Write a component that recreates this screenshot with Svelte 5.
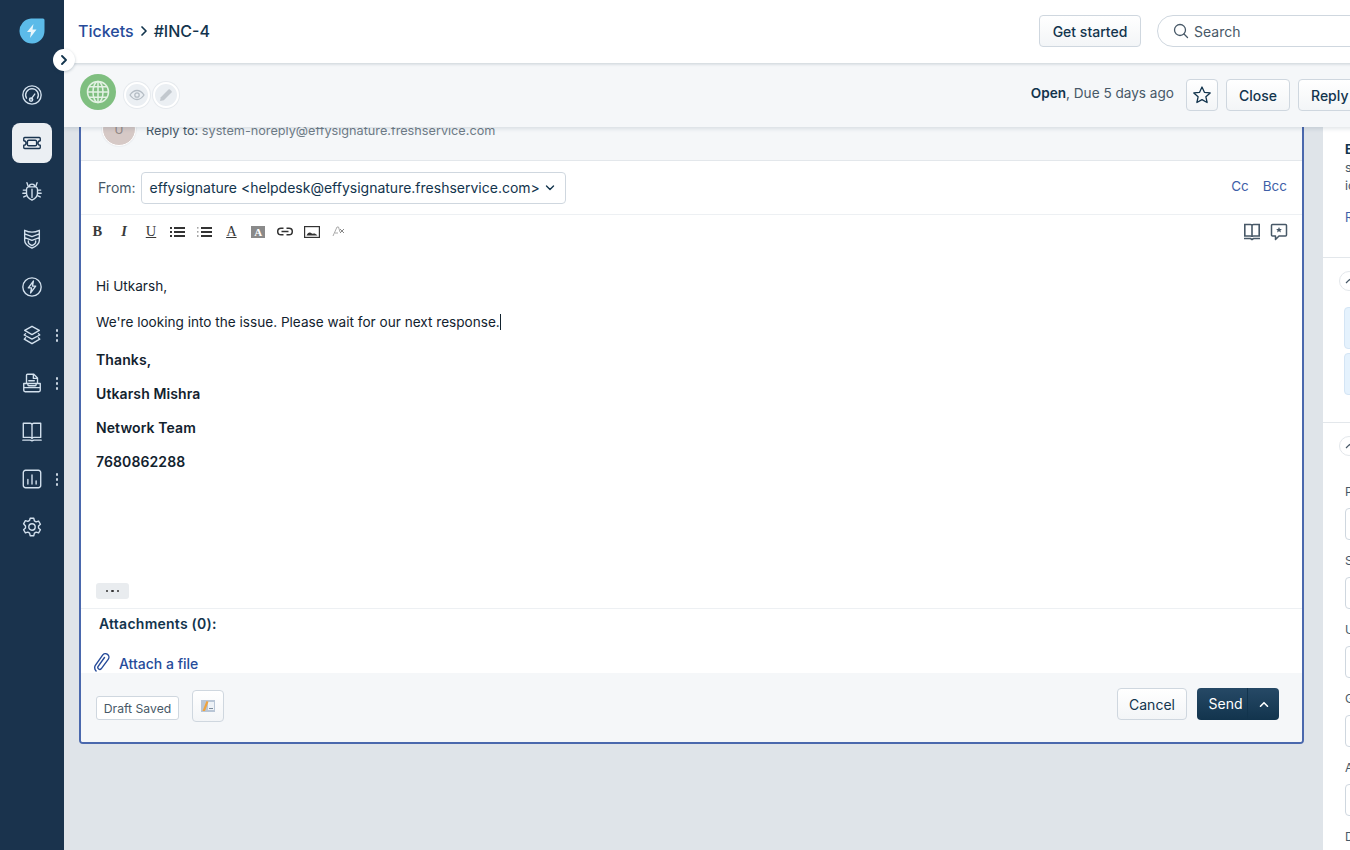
<script lang="ts">
  // sidebar entries, paths are drawn on a 24x24 box
  const nav = [
    { id: 'dashboard', d: 'M12 2a10 10 0 1 1 0 20a10 10 0 0 1 0-20z M12 5a7 7 0 0 0-6 10.500 M12 5a7 7 0 0 1 6 10.500 M11 16.500l4-5.500 M12.800 17a1.800 1.800 0 1 1-3.600 0a1.800 1.800 0 0 1 3.600 0z' },
    { id: 'tickets', active: true, d: 'M4 6h16a1 1 0 0 1 1 1v2.500a2.500 2.500 0 0 0 0 5V17a1 1 0 0 1-1 1H4a1 1 0 0 1-1-1v-2.500a2.500 2.500 0 0 0 0-5V7a1 1 0 0 1 1-1z M8.500 9h7a1.500 1.500 0 0 1 1.500 1.500v3a1.500 1.500 0 0 1-1.500 1.500h-7A1.500 1.500 0 0 1 7 13.500v-3A1.500 1.500 0 0 1 8.500 9z' },
    { id: 'problems', d: 'M8 7.500h8a3 3 0 0 1 2 3v4c0 3.500-3 6-6 7.500c-3-1.500-6-4-6-7.500v-4a3 3 0 0 1 2-3z M8 7.500L6.500 3 M16 7.500L17.500 3 M9 7.500c0-2 1.300-3 3-3s3 1 3 3 M12 10v9 M6 11H2.500 M6 14.500H2 M6 17l-3 1.500 M18 11h3.500 M18 14.500h4 M18 17l3 1.500' },
    { id: 'changes', d: 'M4 2.500c5 2.500 11 2.500 16 0v4l-8 3l-8-3z M4 6.500v7c0 4 4 6.500 8 8.500c4-2 8-4.500 8-8.500v-7 M4 10.500l8 3l8-3 M8 14v1.500c0 1.500 2 2.800 4 3.800c2-1 4-2.300 4-3.800V14' },
    { id: 'releases', d: 'M12 2a10 10 0 1 1 0 20a10 10 0 0 1 0-20z M13.500 5.500L8 13h3.500l-1 5.500L16 11h-3.500z' },
    { id: 'assets', dots: true, d: 'M12 2.500l8 4.500l-8 4.500L4 7z M5 10.500L3.500 12l8.500 4.500l8.500-4.500L19 10.500 M5 15L3.500 16.500L12 21.500l8.500-5L19 15' },
    { id: 'purchase', dots: true, d: 'M6 12V3.500A1 1 0 0 1 7 2.500h7l4 4V12 M13.500 2.500v4.500H18 M8.500 9.500h6 M3 12.500h18V20a1.500 1.500 0 0 1-1.500 1.500h-15A1.500 1.500 0 0 1 3 20z M3 17h18 M7.500 12.500v1.500a1 1 0 0 0 1 1h7a1 1 0 0 0 1-1v-1.500' },
    { id: 'solutions', d: 'M12 5.500V20 M12 5.500C12 4 11 3.500 10 3.500H2.500V19H10c1 0 2 .5 2 1.500c0-1 1-1.500 2-1.500h7.500V3.500H14c-1 0-2 .5-2 2z M2 22h8l2 .8l2-.8h8' },
    { id: 'reports', dots: true, d: 'M5 2.500h14a2.500 2.500 0 0 1 2.500 2.500v14a2.500 2.500 0 0 1-2.500 2.500H5A2.500 2.500 0 0 1 2.500 19V5A2.500 2.500 0 0 1 5 2.500z M7.500 17.500v-5 M12 17.500V7.500 M16.500 17.500v-3.500' },
    { id: 'admin', d: 'M10 2.500h4l.6 2.800l1.900 1.100l2.700-.9l2 3.500l-2.100 1.900v2.200l2.100 1.900l-2 3.500l-2.700-.9l-1.900 1.100l-.6 2.800h-4l-.6-2.800l-1.900-1.100l-2.700.9l-2-3.500l2.100-1.900v-2.200L2.800 8.500l2-3.500l2.700.9l1.900-1.100z M12 8.500a3.500 3.500 0 1 1 0 7a3.500 3.500 0 0 1 0-7z' }
  ];

  const fields = ['Priority', 'Status', 'Urgency', 'Group', 'Agent'];
  const signature = ['Thanks,', 'Utkarsh Mishra', 'Network Team', '7680862288'];
</script>

<div class="app">
  <aside class="sidebar">
    <div class="logo">
      <svg width="26" height="26" viewBox="0 0 26 26">
        <path d="M12 0.500h12a1.500 1.500 0 0 1 1.500 1.500v11a12.500 12.500 0 1 1-13.500-12.500z" fill="#5cbbe9" />
        <path d="M14.500 6L8 14h4l-1 6l6.500-8.500h-4z" fill="#e8f6fc" />
      </svg>
    </div>
    <nav class="nav">
      {#each nav as item}
        <div class="nav-item" class:active={item.active}>
          <svg width="22" height="22" viewBox="0 0 24 24" fill="none" stroke={item.active ? '#1b3550' : '#d3e1ee'} stroke-width="1.500" stroke-linejoin="round" stroke-linecap="round"><path d={item.d} /></svg>
          {#if item.dots}
            <span class="dots"><i></i><i></i><i></i></span>
          {/if}
        </div>
      {/each}
    </nav>
  </aside>

  <button class="expand" aria-label="Expand">
    <svg width="10" height="10" viewBox="0 0 10 10" fill="none" stroke="#12344d" stroke-width="1.800" stroke-linecap="round" stroke-linejoin="round"><path d="M3 1l4 4l-4 4" /></svg>
  </button>

  <main class="main">
    <header class="topbar">
      <div class="crumbs">
        <a href="#tickets">Tickets</a>
        <svg width="10" height="12" viewBox="0 0 10 12" fill="none" stroke="#12344d" stroke-width="1.700" stroke-linecap="round" stroke-linejoin="round"><path d="M3 2l4 4l-4 4" /></svg>
        <span>#INC-4</span>
      </div>
      <button class="btn started">Get started</button>
      <div class="search">
        <svg width="16" height="16" viewBox="0 0 16 16" fill="none" stroke="#475867" stroke-width="1.300" stroke-linecap="round"><circle cx="7" cy="7" r="5.500" /><path d="M11 11l3.500 3.500" /></svg>
        <span>Search</span>
      </div>
    </header>

    <div class="subbar">
      <div class="globe">
        <svg width="24" height="24" viewBox="0 0 24 24" fill="none" stroke="#e3f2e3" stroke-width="1.500"><circle cx="12" cy="12" r="10.500" /><ellipse cx="12" cy="12" rx="5" ry="10.500" /><path d="M12 1.500v21M1.500 12h21M3 6.800h18M3 17.200h18" /></svg>
      </div>
      <span class="round-ico">
        <svg width="16" height="12" viewBox="0 0 16 12" fill="none" stroke="#b4bcc4" stroke-width="1.300"><path d="M1 6c2-3 4.500-4.500 7-4.500S13 3 15 6c-2 3-4.500 4.500-7 4.500S3 9 1 6z" /><circle cx="8" cy="6" r="2.200" /></svg>
      </span>
      <span class="round-ico">
        <svg width="14" height="14" viewBox="0 0 14 14" fill="#c2c8ce"><path d="M1 13l.8-3.800L9.500 1.500a1 1 0 0 1 1.400 0l1.600 1.600a1 1 0 0 1 0 1.400L4.800 12.200z" /></svg>
      </span>
      <div class="status"><b>Open</b>, Due 5 days ago</div>
      <button class="btn star" aria-label="Star">
        <svg width="20" height="20" viewBox="0 0 20 20" fill="none" stroke="#12344d" stroke-width="1.300" stroke-linejoin="round"><path d="M10 2l2.400 5.300l5.800.6l-4.300 3.900l1.200 5.700L10 14.600l-5.100 2.900l1.200-5.700L1.800 7.900l5.800-.6z" /></svg>
      </button>
      <button class="btn close">Close</button>
      <button class="btn reply">Reply</button>
    </div>

    <div class="content">
      <div class="thread">
        <section class="compose">
          <div class="reply-row">
            <span class="avatar">U</span>
            <span class="reply-to">Reply to: <em>system-noreply@effysignature.freshservice.com</em></span>
          </div>

          <div class="from-row">
            <span class="from-label">From:</span>
            <div class="from-select">
              effysignature &lt;helpdesk@effysignature.freshservice.com&gt;
              <svg width="10" height="8" viewBox="0 0 10 8" fill="none" stroke="#12344d" stroke-width="1.400" stroke-linecap="round" stroke-linejoin="round"><path d="M1.500 2l3.500 3.500L8.500 2" /></svg>
            </div>
            <a class="cc" href="#cc">Cc</a>
            <a class="cc" href="#bcc">Bcc</a>
          </div>

          <div class="toolbar">
            <span class="tool serif"><b>B</b></span>
            <span class="tool serif"><b><i>I</i></b></span>
            <span class="tool serif"><u>U</u></span>
            <span class="tool">
              <svg width="15" height="10" viewBox="0 0 15 10" fill="#333"><path d="M0 0h2v2H0zM4 0h11v2H4zM0 4h2v2H0zM4 4h11v2H4zM0 8h2v2H0zM4 8h11v2H4z" /></svg>
            </span>
            <span class="tool">
              <svg width="15" height="10" viewBox="0 0 15 10" fill="#333"><path d="M4 0h11v2H4zM4 4h11v2H4zM4 8h11v2H4z" /><path d="M0 0h1.500v.7H0zM0 4h1.500v.7H0zM0 8h1.500v.7H0zM0 1.500h1.500v.5H0zM0 5.500h1.500v.5H0zM0 9.300h1.500v.7H0z" fill="#888" /></svg>
            </span>
            <span class="tool serif under">A</span>
            <span class="tool"><span class="bg-a">A</span></span>
            <span class="tool">
              <svg width="16" height="9" viewBox="0 0 16 9" fill="none" stroke="#333" stroke-width="1.500"><path d="M6.500 1.200H4a3.300 3.300 0 0 0 0 6.600h2.500M9.500 1.200H12a3.300 3.300 0 0 1 0 6.600H9.500M4.500 4.500h7" /></svg>
            </span>
            <span class="tool">
              <svg width="16" height="12" viewBox="0 0 16 12"><rect x=".6" y=".6" width="14.800" height="10.800" fill="#fff" stroke="#333" stroke-width="1.200" /><path d="M2.500 9.500c1-2.500 2.500-3.500 3.800-3s1.500 1.500 2.700 1.200s2-.7 4.500 1.800z" fill="#333" /></svg>
            </span>
            <span class="tool">
              <svg width="13" height="11" viewBox="0 0 13 11" fill="none" stroke="#aaa" stroke-width="1"><path d="M1 10L5 1h1.500L8 6M3 7h3" /><path d="M8 3l4 4M12 3L8 7" stroke="#888" /></svg>
            </span>
            <span class="tool-spacer"></span>
            <svg width="18" height="18" viewBox="0 0 18 18" fill="none" stroke="#475867" stroke-width="1.600"><path d="M9 2.500V14M9 2.500C9 2 8 1.500 7.500 1.500H1.800V13H7.500C8.300 13 9 13.500 9 14C9 13.500 9.700 13 10.500 13H16.200V1.500H10.500C10 1.500 9 2 9 2.500z" /><path d="M1 15.500h6.500L9 16.500l1.500-1H17" /></svg>
            <svg class="kb" width="18" height="18" viewBox="0 0 18 18" fill="none" stroke="#475867" stroke-width="1.500" stroke-linejoin="round"><path d="M2.500 1.500h13a1 1 0 0 1 1 1v9.500a1 1 0 0 1-1 1H9l-3.500 3.500V13h-3a1 1 0 0 1-1-1V2.500a1 1 0 0 1 1-1z" /><path d="M9 4l.9 1.900l2 .2l-1.500 1.300l.5 2L9 8.300L7.100 9.400l.5-2L6.100 6.100l2-.2z" fill="#475867" stroke="none" /></svg>
          </div>

          <div class="editor">
            <p class="hi">Hi Utkarsh,</p>
            <p class="msg">We're looking into the issue. Please wait for our next response.<span class="caret"></span></p>
            {#each signature as line}
              <p class="sig">{line}</p>
            {/each}
            <span class="more">
              <i></i><i></i><i></i>
            </span>
          </div>

          <div class="attachments">
            <div class="att-title">Attachments (0):</div>
            <a class="attach" href="#attach">
              <svg width="18" height="20" viewBox="0 0 18 20" fill="none" stroke="#264b9a" stroke-width="1.400" stroke-linecap="round"><path d="M11.500 4.500L5 13.500a2 2 0 0 0 3.200 2.300l7-9.500a3.500 3.500 0 0 0-5.600-4.200L2.200 12.500a5 5 0 0 0 .9 5.500" /></svg>
              Attach a file
            </a>
          </div>

          <div class="footer">
            <span class="draft">Draft Saved</span>
            <button class="btn templ" aria-label="Template">
              <svg width="14" height="12" viewBox="0 0 14 12"><rect width="14" height="12" fill="#b9c6d6" /><rect x="7" y="2" width="6" height="8" fill="#eef2f6" /><path d="M1.500 11L5.500 1l2 .8L4 11z" fill="#f0a33c" /><path d="M8 8.500h4" stroke="#7b8b9b" /></svg>
            </button>
            <button class="btn cancel">Cancel</button>
            <div class="send">
              <span class="send-label">Send</span>
              <span class="send-arrow">
                <svg width="10" height="7" viewBox="0 0 10 7" fill="none" stroke="#fff" stroke-width="1.600" stroke-linecap="round" stroke-linejoin="round"><path d="M1.500 5.200L5 1.700l3.500 3.500" /></svg>
              </span>
            </div>
          </div>
        </section>
      </div>

      <aside class="panel">
        <div class="panel-top">
          <b>Email</b>
          <span>subject line</span>
          <span>id of request</span>
          <a href="#read">Read more</a>
        </div>
        <div class="panel-sec first">
          <span class="toggle">
            <svg width="9" height="6" viewBox="0 0 9 6" fill="none" stroke="#475867" stroke-width="1.200"><path d="M1 5l3.500-3.500L8 5" /></svg>
          </span>
          <div class="blue"></div>
          <div class="blue"></div>
        </div>
        <div class="panel-sec">
          <span class="toggle">
            <svg width="9" height="6" viewBox="0 0 9 6" fill="none" stroke="#475867" stroke-width="1.200"><path d="M1 5l3.500-3.500L8 5" /></svg>
          </span>
          <div class="fields">
            {#each fields as f}
              <label class="field"><span>{f}</span><div class="input"></div></label>
            {/each}
            <label class="field"><span>Department</span></label>
          </div>
        </div>
      </aside>
    </div>
  </main>
</div>

<style>
  :global(body) {
    margin: 0;
    font-family: Inter, "Liberation Sans", sans-serif;
    color: #12344d;
  }

  .app {
    display: flex;
    height: 850px;
    overflow: hidden;
    position: relative;
  }

  .sidebar {
    width: 64px;
    flex: none;
    background: #1a334d;
  }

  .logo {
    display: flex;
    justify-content: center;
    padding: 18px 0 0;
    height: 53px;
  }

  .nav {
    display: flex;
    flex-direction: column;
    gap: 8px;
    padding: 4px 12px 0;
  }

  .nav-item {
    width: 40px;
    height: 40px;
    border-radius: 8px;
    display: flex;
    align-items: center;
    justify-content: center;
    position: relative;
  }

  .nav-item.active {
    background: #ebeff3;
  }

  .dots {
    position: absolute;
    left: 44px;
    top: 14px;
    display: flex;
    flex-direction: column;
    gap: 2px;
  }

  .dots i {
    width: 2px;
    height: 3px;
    border-radius: 1px;
    background: #c8d4e0;
  }

  .expand {
    position: absolute;
    left: 53px;
    top: 49px;
    width: 22px;
    height: 22px;
    padding: 0;
    border: 0;
    border-radius: 50%;
    background: #fff;
    box-shadow: 0 1px 3px rgba(18, 52, 77, 0.25);
    display: flex;
    align-items: center;
    justify-content: center;
    z-index: 5;
  }

  .main {
    flex: 1;
    min-width: 0;
    display: flex;
    flex-direction: column;
    background: #dfe4e9;
  }

  .topbar {
    height: 63px;
    box-sizing: border-box;
    flex: none;
    background: #fff;
    display: flex;
    align-items: center;
    padding: 0 0 1px 14px;
    margin-right: -27px;
    z-index: 3;
    box-shadow: 0 1px 3px rgba(18, 52, 77, 0.2);
  }

  .crumbs {
    display: flex;
    align-items: center;
    gap: 5px;
    font-size: 16px;
    font-weight: 500;
    flex: 1;
  }

  .crumbs a {
    color: #264b9a;
    text-decoration: none;
  }

  .btn {
    font-family: inherit;
    color: #12344d;
    background: linear-gradient(#fff, #f3f5f7);
    border: 1px solid #cfd7df;
    border-radius: 4px;
    height: 32px;
    padding: 0;
    font-size: 14px;
    font-weight: 500;
    display: flex;
    align-items: center;
    justify-content: center;
  }

  .started {
    width: 102px;
    margin-right: 16px;
  }

  .search {
    width: 220px;
    height: 32px;
    box-sizing: border-box;
    border: 1px solid #cfd7df;
    border-radius: 16px;
    display: flex;
    align-items: center;
    gap: 5px;
    padding-left: 15px;
    font-size: 14px;
    color: #475867;
  }

  .subbar {
    height: 64px;
    flex: none;
    background: #f5f7f9;
    display: flex;
    align-items: center;
    padding-left: 16px;
    margin-right: -27px;
    z-index: 2;
    box-shadow: 0 2px 4px rgba(18, 52, 77, 0.12);
  }

  .globe {
    width: 36px;
    height: 36px;
    border-radius: 50%;
    background: #7fbf80;
    display: flex;
    align-items: center;
    justify-content: center;
    margin: -7px 8px 0 0;
  }

  .round-ico {
    width: 22px;
    height: 22px;
    border-radius: 50%;
    background: #ebeff3;
    border: 2px solid #fff;
    box-shadow: 0 0 0 1px #e6eaee;
    display: flex;
    align-items: center;
    justify-content: center;
    margin-right: 3px;
  }

  .status {
    margin-left: auto;
    margin-right: 12px;
    font-size: 13.600px;
    color: #475867;
    margin-top: -4px;
  }

  .status b {
    color: #12344d;
    font-weight: 600;
  }

  .star {
    width: 32px;
    margin-right: 8px;
  }

  .close {
    width: 64px;
    margin-right: 8px;
  }

  .reply {
    width: 79px;
    justify-content: flex-start;
    padding-left: 12px;
  }

  .content {
    flex: 1;
    min-height: 0;
    display: flex;
  }

  .thread {
    flex: 1;
    min-width: 0;
    padding: 0 19px 0 15px;
  }

  .compose {
    margin-top: -31px;
    border: 2px solid #4a68ad;
    border-radius: 4px;
    background: #fff;
    overflow: hidden;
  }

  .reply-row {
    height: 63px;
    box-sizing: border-box;
    background: #f5f7f9;
    border-bottom: 1px solid #e3e7eb;
    display: flex;
    align-items: flex-start;
    padding: 14px 0 0 21px;
    font-size: 12.700px;
    line-height: 17px;
    color: #475867;
  }

  .avatar {
    width: 32px;
    height: 32px;
    flex: none;
    border-radius: 50%;
    background: #d6c9c6;
    border: 1px solid #fff;
    box-shadow: 0 0 0 1px #eceff2;
    font-size: 12px;
    color: #8f8683;
    display: flex;
    align-items: center;
    justify-content: center;
    margin-right: 10px;
  }

  .reply-to {
    margin-top: 10px;
  }

  .reply-to em {
    font-style: normal;
    color: #6f7c87;
  }

  .from-row {
    height: 54px;
    box-sizing: border-box;
    border-bottom: 1px solid #edf0f3;
    display: flex;
    align-items: center;
    padding: 0 15px 0 17px;
    font-size: 14px;
  }

  .from-label {
    color: #475867;
    margin-right: 5px;
  }

  .from-select {
    height: 32px;
    box-sizing: border-box;
    width: 425px;
    border: 1px solid #cfd7df;
    border-radius: 4px;
    display: flex;
    align-items: center;
    justify-content: space-between;
    padding: 0 10px 0 8px;
    margin-right: auto;
    white-space: nowrap;
  }

  .cc {
    color: #3f5fa8;
    text-decoration: none;
    font-size: 13.500px;
    margin-left: 14px;
    margin-top: -3px;
  }

  .toolbar {
    display: flex;
    align-items: center;
    box-sizing: border-box;
    padding: 0 14px 0 3px;
    height: 33px;
  }

  .tool {
    width: 26.800px;
    flex: none;
    display: flex;
    justify-content: center;
    color: #3a3a3a;
    font-size: 14.500px;
  }

  .serif {
    font-family: "Liberation Serif", serif;
  }

  .under {
    text-decoration: underline;
  }

  .bg-a {
    width: 14px;
    height: 12px;
    background: #8a8a8a;
    color: #fff;
    font: 700 11px/12px "Liberation Serif", serif;
    text-align: center;
  }

  .tool-spacer {
    flex: 1;
  }

  .kb {
    margin-left: 9px;
  }

  .editor {
    height: 360px;
    box-sizing: border-box;
    padding: 28px 15px 0;
    font-size: 13.600px;
    position: relative;
    color: #12222e;
  }

  .editor p {
    margin: 0;
    line-height: 20px;
  }

  .hi {
    margin-bottom: 16px !important;
  }

  .msg {
    margin-bottom: 18px !important;
  }

  .sig {
    font-size: 14px;
    letter-spacing: 0.1px;
    font-weight: 600;
    margin-bottom: 14px !important;
  }

  .caret {
    display: inline-block;
    width: 1px;
    height: 16px;
    background: #12222e;
    vertical-align: -3px;
  }

  .more {
    position: absolute;
    left: 15px;
    bottom: 9px;
    width: 33px;
    height: 16px;
    border-radius: 3px;
    background: #e9ecef;
    display: flex;
    align-items: center;
    justify-content: center;
    gap: 3px;
  }

  .more i {
    width: 2.500px;
    height: 2.500px;
    background: #333;
    border-radius: 50%;
  }

  .attachments {
    height: 65px;
    box-sizing: border-box;
    border-top: 1px solid #edf0f3;
    padding: 6px 0 0 12px;
    overflow: hidden;
  }

  .att-title {
    font-size: 14px;
    letter-spacing: 0.25px;
    font-weight: 600;
    padding-left: 6px;
    line-height: 17px;
  }

  .attach {
    display: flex;
    align-items: center;
    gap: 8px;
    margin-top: 21px;
    color: #264b9a;
    font-size: 14px;
    font-weight: 500;
    text-decoration: none;
  }

  .footer {
    height: 69px;
    background: #f5f7f9;
    display: flex;
    align-items: flex-start;
    padding: 15px 23px 0 15px;
    box-sizing: border-box;
  }

  .draft {
    width: 83px;
    height: 24px;
    box-sizing: border-box;
    border: 1px solid #cfd7df;
    border-radius: 3px;
    background: #fff;
    text-align: center;
    font-size: 12.200px;
    line-height: 23px;
    color: #475867;
    margin: 8px 13px 0 0;
  }

  .templ {
    width: 32px;
    margin: 2px auto 0 0;
  }

  .cancel {
    width: 70px;
    margin-right: 10px;
    font-weight: 400;
  }

  .send {
    width: 82px;
    height: 32px;
    border-radius: 4px;
    background: linear-gradient(#264966, #12344d);
    color: #fff;
    display: flex;
    font-size: 14px;
  }

  .send-label {
    width: 51px;
    box-sizing: border-box;
    padding-left: 7px;
    line-height: 32px;
    text-align: center;
    border-right: 1px solid #12344d;
  }

  .send-arrow {
    flex: 1;
    display: flex;
    align-items: center;
    justify-content: center;
  }

  .panel {
    width: 27px;
    flex: none;
    background: #fff;
    overflow: hidden;
  }

  .panel-top {
    width: 300px;
    height: 131px;
    box-sizing: border-box;
    padding: 14px 0 0 22px;
    font-size: 12.500px;
    display: flex;
    flex-direction: column;
    gap: 1px;
    color: #475867;
    line-height: 17px;
    border-bottom: 1px solid #e3e7eb;
  }

  .panel-top b {
    color: #12344d;
  }

  .panel-top a {
    color: #3f5fa8;
    text-decoration: none;
    margin-top: 14px;
  }

  .panel-sec {
    width: 300px;
    padding: 13px 0 0 16px;
    box-sizing: border-box;
  }

  .panel-sec.first {
    height: 165px;
    border-bottom: 1px solid #e3e7eb;
  }

  .toggle {
    display: flex;
    width: 18px;
    height: 18px;
    border-radius: 50%;
    border: 1px solid #e3e7eb;
    align-items: center;
    justify-content: center;
    margin-bottom: 16px;
  }

  .blue {
    margin: 0 0 4px 5px;
    height: 40px;
    border-radius: 4px;
    background: #e5f2fd;
    border: 1px solid #d4e5f5;
  }

  .fields {
    display: flex;
    flex-direction: column;
    padding: 13px 0 0 6px;
  }

  .field {
    height: 69px;
    font-size: 12px;
    color: #475867;
    line-height: 14px;
  }

  .field span {
    display: block;
    height: 23px;
  }

  .input {
    height: 30px;
    border: 1px solid #cfd7df;
    border-radius: 4px;
  }
</style>
